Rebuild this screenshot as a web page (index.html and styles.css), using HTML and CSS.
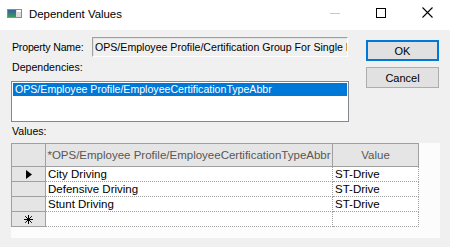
FILE: index.html
```html
<!DOCTYPE html>
<html>
<head>
<meta charset="utf-8">
<link rel="stylesheet" href="styles.css">
</head>
<body>
<div class="titlebar">
  <svg class="app-icon" width="15" height="9" viewBox="0 0 15 9">
    <defs>
      <linearGradient id="g" x1="0" y1="0" x2="0" y2="1">
        <stop offset="0" stop-color="#2f5f9e"/>
        <stop offset="1" stop-color="#3f9a5a"/>
      </linearGradient>
    </defs>
    <rect x="0.5" y="0.5" width="14" height="8" fill="#dcdcdc" stroke="#8c8c8c"/>
    <rect x="1" y="1" width="8" height="7" fill="url(#g)"/>
    <rect x="10" y="1" width="4" height="2" fill="#ffffff"/>
  </svg>
  <span class="title">Dependent Values</span>
  <div class="controls">
    <div class="ctl"><svg width="10" height="10" viewBox="0 0 10 10"><line x1="0" y1="5.5" x2="10" y2="5.5" stroke="#c8c8c8" stroke-width="1"/></svg></div>
    <div class="ctl"><svg width="10" height="10" viewBox="0 0 10 10"><rect x="0.5" y="0.5" width="9" height="9" fill="none" stroke="#000" stroke-width="1"/></svg></div>
    <div class="ctl"><svg width="11" height="11" viewBox="0 0 11 11"><path d="M0.5 0.5 L10.5 10.5 M10.5 0.5 L0.5 10.5" stroke="#000" stroke-width="1.1"/></svg></div>
  </div>
</div>
<div class="content">
  <div class="top">
    <div class="form">
      <div class="prop-row">
        <span class="prop-label">Property Name:</span>
        <div class="textbox">OPS/Employee Profile/Certification Group For Single Employee</div>
      </div>
      <div class="label dep-label">Dependencies:</div>
      <div class="listbox">
        <div class="item selected">OPS/Employee Profile/EmployeeCertificationTypeAbbr</div>
      </div>
    </div>
    <div class="buttons">
      <div class="btn default">OK</div>
      <div class="btn">Cancel</div>
    </div>
  </div>
  <div class="label values-label">Values:</div>
  <div class="dgv">
    <div class="row hdr">
      <div class="c rh"></div>
      <div class="c c1">*OPS/Employee Profile/EmployeeCertificationTypeAbbr</div>
      <div class="c c2">Value</div>
    </div>
    <div class="row">
      <div class="c rh"><svg width="6" height="9" viewBox="0 0 6 9"><path d="M0 0 L6 4.5 L0 9 Z" fill="#000"/></svg></div>
      <div class="c c1">City Driving</div>
      <div class="c c2">ST-Drive</div>
    </div>
    <div class="row">
      <div class="c rh"></div>
      <div class="c c1">Defensive Driving</div>
      <div class="c c2">ST-Drive</div>
    </div>
    <div class="row">
      <div class="c rh"></div>
      <div class="c c1">Stunt Driving</div>
      <div class="c c2">ST-Drive</div>
    </div>
    <div class="row">
      <div class="c rh"><svg width="9" height="9" viewBox="0 0 9 9"><path d="M4.5 0 V9 M0 4.5 H9 M1.2 1.2 L7.8 7.8 M7.8 1.2 L1.2 7.8" stroke="#000" stroke-width="1"/></svg></div>
      <div class="c c1"></div>
      <div class="c c2"></div>
    </div>
  </div>
</div>
</body>
</html>
```

FILE: styles.css
```css
html, body {
  margin: 0;
  padding: 0;
}
body {
  width: 450px;
  height: 247px;
  overflow: hidden;
  background: #f0f0f0;
  font-family: "Liberation Sans", Arial, sans-serif;
  font-size: 10.6px;
  color: #000;
}
.titlebar {
  height: 30px;
  background: #fff;
  display: flex;
  align-items: center;
}
.app-icon {
  margin-left: 7px;
  margin-top: -4px;
  flex: none;
}
.title {
  margin-left: 7px;
  font-size: 11.4px;
  margin-top: -3px;
}
.controls {
  margin-left: auto;
  display: flex;
  height: 30px;
}
.ctl {
  width: 46px;
  height: 30px;
  display: flex;
  align-items: center;
  justify-content: center;
}
.ctl svg {
  margin-top: -5px;
}
.content {
  padding: 0 0 0 11px;
}
.top {
  display: flex;
}
.form {
  width: 338px;
}
.prop-row {
  display: flex;
  align-items: center;
  margin-top: 7px;
  height: 20px;
}
.prop-label {
  width: 80px;
  padding-left: 1px;
  letter-spacing: -0.2px;
  flex: none;
}
.textbox {
  width: 256px;
  height: 20px;
  box-sizing: border-box;
  border: 1px solid;
  border-color: #a0a0a0 #ffffff #ffffff #a0a0a0;
  box-shadow: inset 1px 1px 0 #e3e3e3;
  padding: 3px 0 0 2px;
  white-space: nowrap;
  overflow: hidden;
  line-height: 13px;
}
.label {
  line-height: 13px;
  padding-left: 1px;
}
.dep-label {
  margin-top: 4px;
  margin-bottom: 7px;
}
.listbox {
  height: 41px;
  box-sizing: border-box;
  border: 1px solid #828790;
  background: #fff;
  padding: 1px;
}
.item {
  height: 13px;
  line-height: 13px;
  padding-left: 2px;
  white-space: nowrap;
}
.selected {
  background: #0078d7;
  color: #fff;
}
.buttons {
  margin-left: 17px;
  padding-top: 10px;
  display: flex;
  flex-direction: column;
  gap: 6px;
}
.btn {
  width: 73px;
  height: 21px;
  box-sizing: border-box;
  border: 1px solid #adadad;
  background: #e1e1e1;
  display: flex;
  align-items: center;
  justify-content: center;
  font-size: 11px;
}
.btn.default {
  border: 2px solid #0078d7;
}
.values-label {
  margin-top: 3px;
  margin-bottom: 5px;
}
.dgv {
  width: 429px;
  height: 95px;
  background: #fcfcfc;
  font-size: 11.5px;
}
.row {
  display: flex;
  height: 15px;
}
.row.hdr {
  height: 24px;
}
.c {
  box-sizing: border-box;
  white-space: nowrap;
  overflow: hidden;
  background: #fff;
  border-right: 1px dotted #a0a0a0;
  border-bottom: 1px dotted #a0a0a0;
  line-height: 14px;
  padding-left: 2px;
}
.rh {
  width: 35px;
  background: #e5e5e5;
  border-left: 1px solid #a0a0a0;
  border-right: 1px solid #a0a0a0;
  border-bottom: 1px solid #a0a0a0;
  display: flex;
  align-items: center;
  justify-content: center;
  padding-left: 0;
}
.c1 {
  width: 287px;
}
.c2 {
  width: 86px;
}
.hdr .c {
  background: #e5e5e5;
  border-top: 1px solid #a0a0a0;
  border-right: 1px solid #a0a0a0;
  border-bottom: 1px solid #a0a0a0;
  color: #575757;
  line-height: 22px;
  text-align: center;
  padding-left: 0;
}
.hdr .rh {
  border-left: 1px solid #a0a0a0;
}
```
